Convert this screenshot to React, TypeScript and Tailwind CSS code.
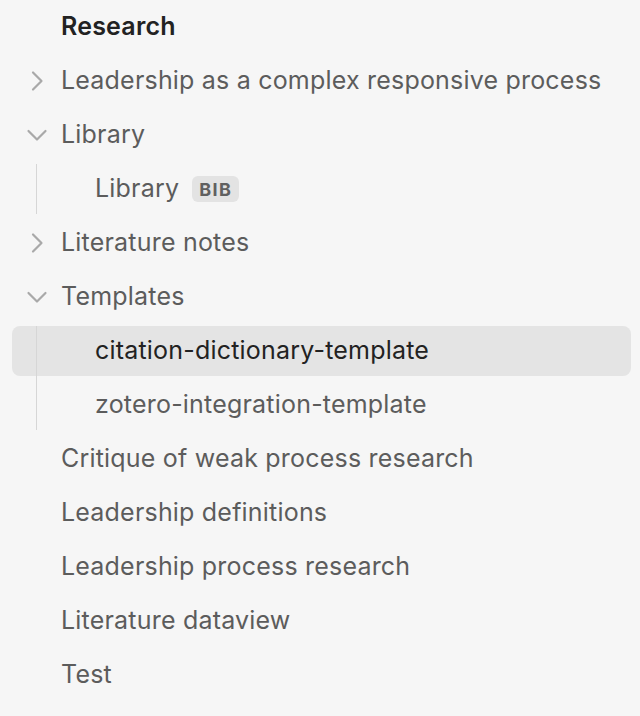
import React from 'react';

type Item = {
  label: string;
  depth: 0 | 1;
  chevron?: 'right' | 'down';
  badge?: string;
  active?: boolean;
};

// chevrons drawn to match the thin grey strokes in the file tree
function Chevron({ dir }: { dir: 'right' | 'down' }) {
  return (
    <svg width="24" height="24" viewBox="0 0 24 24" fill="none" stroke="#a9a9a9" strokeWidth="2.2" strokeLinecap="round" strokeLinejoin="round">
      {dir === 'right' ? <polyline points="8,3.5 16.5,12 8,20.5" /> : <polyline points="3.5,8 12,16.5 20.5,8" />}
    </svg>
  );
}

function Row({ item }: { item: Item }) {
  return (
    <div
      className={`flex items-center h-[50px] my-[2px] ml-[12px] mr-[9px] rounded-lg ${
        item.active ? 'bg-[#e4e4e4] text-[#222222]' : 'text-[#5c5c5c]'
      } ${item.depth === 1 ? 'pl-[83px]' : ''}`}
    >
      {item.depth === 0 && (
        <div className="w-[49px] shrink-0 flex justify-center">{item.chevron && <Chevron dir={item.chevron} />}</div>
      )}
      <span className="whitespace-nowrap">{item.label}</span>
      {item.badge && (
        <span className="ml-[13px] h-[26px] px-[7px] rounded-md bg-[#e3e3e3] text-[#606060] text-[18px] font-bold tracking-[0.08em] flex items-center">
          {item.badge}
        </span>
      )}
    </div>
  );
}

function Group({ children }: { children: React.ReactNode }) {
  return (
    <div className="relative flex flex-col">
      {children}
      <div className="absolute left-[36px] top-[2px] bottom-[2px] w-px bg-[#d6d6d6]" />
    </div>
  );
}

export default function App() {
  return (
    <div
      className="h-screen w-full bg-[#f6f6f6] text-[25px] tracking-[0.2px] overflow-hidden flex flex-col"
      style={{ fontFamily: 'Inter, sans-serif' }}
    >
      <div className="flex items-center h-[50px] my-[2px] pl-[61px] font-semibold text-[#222222]">Research</div>
      <Row item={{ label: 'Leadership as a complex responsive process', depth: 0, chevron: 'right' }} />
      <Row item={{ label: 'Library', depth: 0, chevron: 'down' }} />
      <Group>
        <Row item={{ label: 'Library', depth: 1, badge: 'BIB' }} />
      </Group>
      <Row item={{ label: 'Literature notes', depth: 0, chevron: 'right' }} />
      <Row item={{ label: 'Templates', depth: 0, chevron: 'down' }} />
      <Group>
        <Row item={{ label: 'citation-dictionary-template', depth: 1, active: true }} />
        <Row item={{ label: 'zotero-integration-template', depth: 1 }} />
      </Group>
      <Row item={{ label: 'Critique of weak process research', depth: 0 }} />
      <Row item={{ label: 'Leadership definitions', depth: 0 }} />
      <Row item={{ label: 'Leadership process research', depth: 0 }} />
      <Row item={{ label: 'Literature dataview', depth: 0 }} />
      <Row item={{ label: 'Test', depth: 0 }} />
    </div>
  );
}
